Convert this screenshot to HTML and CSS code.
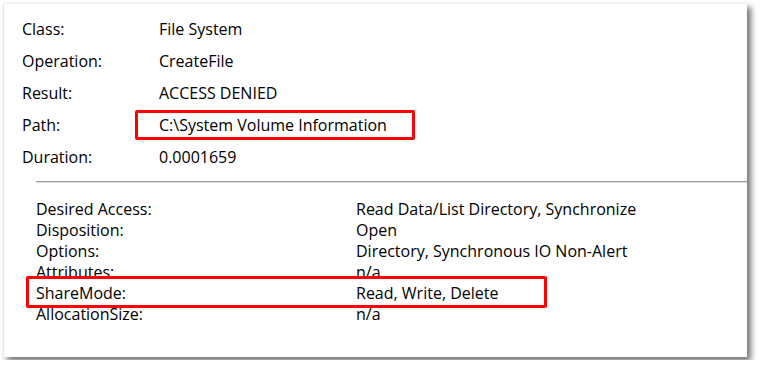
FILE: index.html
```html
<!DOCTYPE html>
<html lang="en">

<head>
    <meta charset="UTF-8">
    <title>Event Properties</title>
    <link rel="stylesheet" href="styles.css">
</head>

<body>
    <div class="panel">
        <div class="summary">
            <div class="row"><span class="label">Class:</span><span class="value">File System</span></div>
            <div class="row"><span class="label">Operation:</span><span class="value">CreateFile</span></div>
            <div class="row"><span class="label">Result:</span><span class="value">ACCESS DENIED</span></div>
            <div class="row"><span class="label">Path:</span><span class="value mark">C:\System Volume Information</span></div>
            <div class="row"><span class="label">Duration:</span><span class="value">0.0001659</span></div>
        </div>
        <div class="sep"></div>
        <div class="details">
            <div class="drow"><span>Desired Access:</span><span>Read Data/List Directory, Synchronize</span></div>
            <div class="drow"><span>Disposition:</span><span>Open</span></div>
            <div class="drow"><span>Options:</span><span>Directory, Synchronous IO Non-Alert</span></div>
            <div class="drow"><span>Attributes:</span><span>n/a</span></div>
            <div class="drow hl"><span>ShareMode:</span><span>Read, Write, Delete</span></div>
            <div class="drow"><span>AllocationSize:</span><span>n/a</span></div>
        </div>
    </div>
</body>

</html>
```

FILE: styles.css
```css
* {
    padding: 0;
    margin: 0;
    box-sizing: border-box;
}

body {
    background: #fff;
    font-family: "Open Sans", "Noto Sans", sans-serif;
    font-size: 16px;
    color: #000;
}

.panel {
    margin: 3px;
    width: 744px;
    height: 354px;
    border-left: 1px solid #e6e6e6;
    border-top: 1px solid #f0f0f0;
    background: #fff;
    box-shadow: 4px 4px 6px rgba(0, 0, 0, 0.55);
}

.summary {
    padding: 9px 0 0 18px;
}

.row {
    display: flex;
    height: 32px;
    align-items: center;
}

.label {
    width: 137px;
}

/* red marker round the path */
.mark {
    margin-left: -24px;
    width: 280px;
    height: 30px;
    padding-left: 21px;
    border: 3px solid #f00;
    border-radius: 2px;
    display: flex;
    align-items: center;
}

.sep {
    margin: 8px 0 0 32px;
    border-top: 1px solid #a0a0a0;
    border-bottom: 1px solid #dcdcdc;
}

.details {
    padding: 16px 0 0 32px;
}

.drow {
    display: flex;
    height: 21px;
    line-height: 21px;
}

.drow span:first-child {
    width: 320px;
}

/* red marker over the sharemode row */
.hl {
    position: relative;
    z-index: 1;
    background: #fff;
    width: 521px;
    height: 32px;
    margin: -7px 0 -4px -10px;
    padding: 4px 0 1px 7px;
    border: 3px solid #f00;
    border-radius: 2px;
}

.hl span:first-child {
    width: 320px;
}
```
